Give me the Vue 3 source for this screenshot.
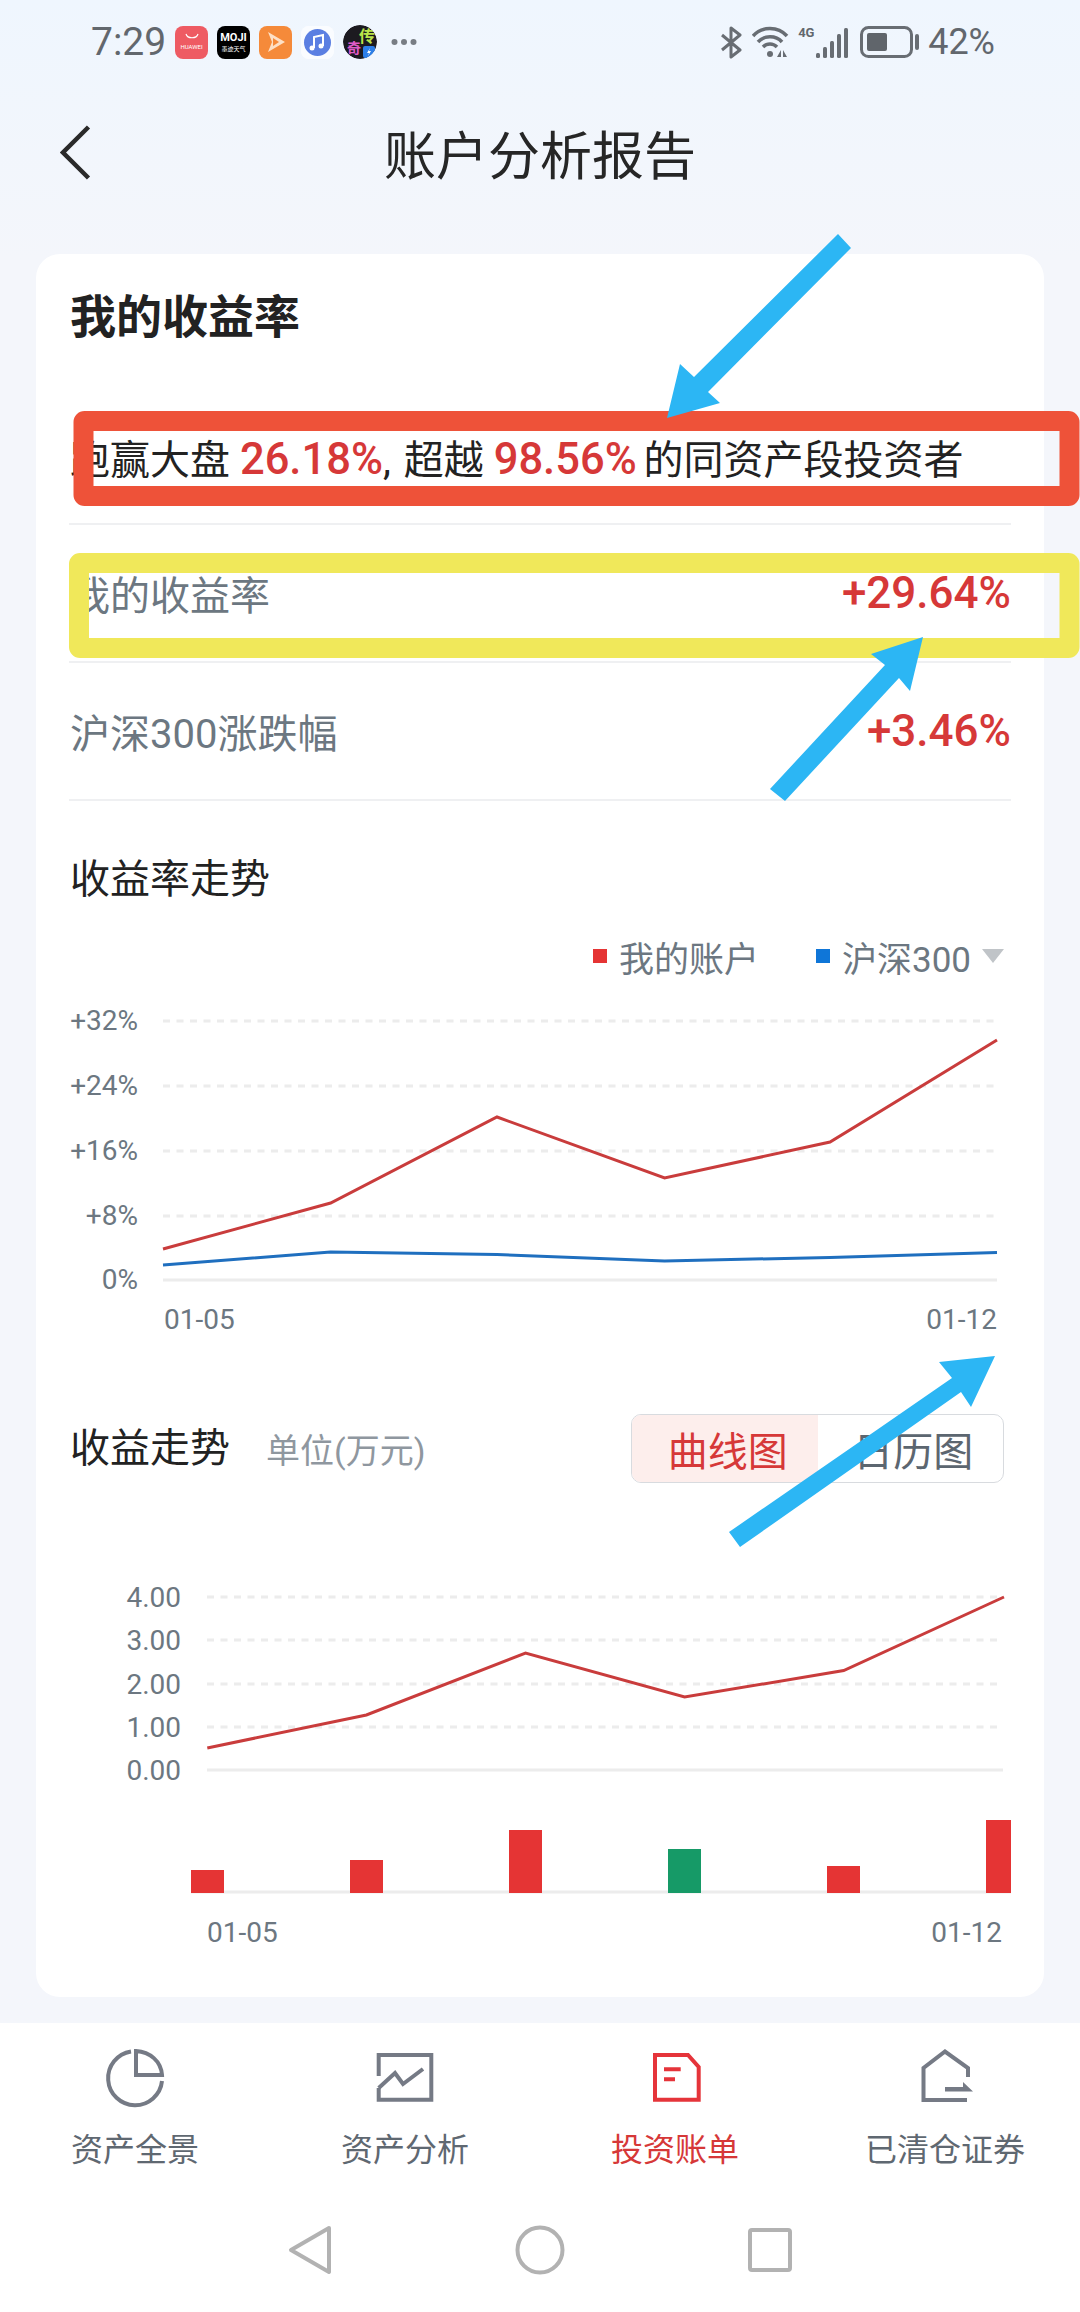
<script setup>
const pts = (xs, ys) => xs.map((x, i) => `${x},${ys[i]}`).join(' ')

const rows = [
  { label: '我的收益率', value: '+29.64%' },
  { label: '沪深300涨跌幅', value: '+3.46%' }
]

const rateTicks = [
  { y: 1020, label: '+32%' },
  { y: 1085, label: '+24%' },
  { y: 1150, label: '+16%' },
  { y: 1215, label: '+8%' }
]
const rateX = [163, 330.6, 497, 664.6, 830, 997]
const rateMine = pts(rateX, [1248, 1202, 1116, 1177, 1141, 1039])
const rateIndex = pts(rateX, [1264, 1251, 1253.6, 1260, 1256.4, 1251.4])

const incomeTicks = [
  { y: 1597, label: '4.00' },
  { y: 1640, label: '3.00' },
  { y: 1684, label: '2.00' },
  { y: 1727, label: '1.00' }
]
const incomeLine = pts(
  [207.3, 366.4, 525.5, 684.6, 843.7, 1004],
  [1748, 1715, 1653, 1697, 1670.6, 1597]
)
const bars = [
  { x: 191, w: 33, top: 1870, fill: '#e53434' },
  { x: 350, w: 33, top: 1860, fill: '#e53434' },
  { x: 509, w: 33, top: 1830, fill: '#e53434' },
  { x: 668, w: 33, top: 1849, fill: '#169a67' },
  { x: 827, w: 33, top: 1866, fill: '#e53434' },
  { x: 986, w: 25, top: 1820, fill: '#e53434' }
]
const signal = [
  { x: 0, h: 5 },
  { x: 7, h: 11 },
  { x: 14, h: 17 },
  { x: 21, h: 24 },
  { x: 28, h: 30 }
]
</script>

<template>
  <div class="page">
    <div class="status">
      <span class="time">7:29</span>
      <div class="apps">
        <div class="app huawei">
          <svg width="14" height="7" viewBox="0 0 14 7"><path d="M1 1c1.500 5 10.500 5 12 0" fill="none" stroke="#fff" stroke-width="1.200"/></svg>
          <span>HUAWEI</span>
        </div>
        <div class="app moji">
          <b>MOJI</b>
          <span>墨迹天气</span>
        </div>
        <div class="app play">
          <svg width="24" height="24" viewBox="0 0 24 24"><path d="M4 2 L21 12 L4 22 L8 12 Z" fill="#fde0c6"/><path d="M9 8 L15 12 L9 16 Z" fill="#f58a3a"/></svg>
        </div>
        <div class="app music">
          <svg width="33" height="33" viewBox="0 0 33 33">
            <rect width="33" height="33" rx="6" fill="#fafcff"/>
            <circle cx="16.500" cy="16.500" r="13.500" fill="#5b7fe2"/>
            <path d="M13 22V11l9-2v11" fill="none" stroke="#fff" stroke-width="2"/>
            <circle cx="11" cy="22" r="2.500" fill="#fff"/>
            <circle cx="20" cy="20" r="2.500" fill="#fff"/>
          </svg>
        </div>
        <div class="app game">
          <svg width="34" height="34" viewBox="0 0 34 34">
            <circle cx="17" cy="17" r="17" fill="#1c1a20"/>
            <text x="16" y="17" class="g1">传</text>
            <text x="4" y="28" class="g2">奇</text>
            <rect x="20" y="21" width="12" height="12" rx="2" fill="#2d7fe8"/>
            <path d="M27 23l-3 5h2l-1 3 3-5h-2z" fill="#fff"/>
          </svg>
        </div>
        <svg class="more" width="26" height="8" viewBox="0 0 26 8">
          <circle cx="3.500" cy="4" r="3" fill="#787d84"/>
          <circle cx="13" cy="4" r="3" fill="#787d84"/>
          <circle cx="22.500" cy="4" r="3" fill="#787d84"/>
        </svg>
      </div>
      <div class="sys">
        <svg class="bt" width="23" height="33" viewBox="0 0 23 33"><path d="M2 9 L20 24 L11 31 V2 L20 9 L2 24" fill="none" stroke="#686d73" stroke-width="3" stroke-linejoin="round"/></svg>
        <svg class="wifi" width="37" height="32" viewBox="0 0 37 32">
          <path d="M1 10C10 0 26 0 35 10" fill="none" stroke="#686d73" stroke-width="3.500"/>
          <path d="M6 16C12 9 24 9 30 16" fill="none" stroke="#686d73" stroke-width="3.500"/>
          <path d="M11 21C15 17 21 17 25 21" fill="none" stroke="#686d73" stroke-width="3.500"/>
          <circle cx="18" cy="28" r="3" fill="#686d73"/>
          <path d="M29 24v7h-4zM31 24v7h4z" fill="#686d73"/>
        </svg>
        <div class="cell">
          <span class="net">4G</span>
          <svg class="signal" width="32" height="30" viewBox="0 0 32 30">
            <rect v-for="b in signal" :key="b.x" :x="b.x" :y="30 - b.h" width="4" :height="b.h" rx="1.500" fill="#686d73"/>
          </svg>
        </div>
        <svg class="battery" width="60" height="32" viewBox="0 0 60 32">
          <rect x="1.500" y="1.500" width="50" height="29" rx="7" fill="none" stroke="#686d73" stroke-width="3"/>
          <rect x="7" y="7" width="20" height="18" rx="2" fill="#60656b"/>
          <rect x="55" y="8" width="4" height="16" rx="2" fill="#686d73"/>
        </svg>
        <span class="pct">42%</span>
      </div>
    </div>

    <header class="nav">
      <svg class="back" width="32" height="56" viewBox="0 0 32 56"><path d="M28.500 2 L3 27.500 L28.500 53" fill="none" stroke="#2a2a2a" stroke-width="4.500"/></svg>
      <h1>账户分析报告</h1>
    </header>

    <main class="card">
      <h2 class="card-title">我的收益率</h2>
      <div class="row summary">
        <span>跑赢大盘 <em>26.18%</em><span class="comma">,</span> 超越 <em class="tight">98.56%</em> 的同资产段投资者</span>
      </div>
      <div v-for="r in rows" :key="r.label" class="row">
        <span class="label">{{ r.label }}</span>
        <span class="value">{{ r.value }}</span>
      </div>

      <h3 class="sub first">收益率走势</h3>
      <div class="legend">
        <i class="dot red"></i><span>我的账户</span>
        <i class="dot blue"></i><span>沪深300</span>
        <i class="tri"></i>
      </div>
      <svg class="chart one" width="1008" height="355" viewBox="36 990 1008 355">
        <line v-for="t in rateTicks" :key="t.y" x1="163" x2="997" :y1="t.y" :y2="t.y" class="grid"/>
        <text v-for="t in rateTicks" :key="t.label" x="138" :y="t.y + 9" text-anchor="end" class="tick">{{ t.label }}</text>
        <line x1="163" x2="997" y1="1279" y2="1279" class="axis"/>
        <text x="138" y="1288" text-anchor="end" class="tick">0%</text>
        <polyline :points="rateMine" class="line mine"/>
        <polyline :points="rateIndex" class="line index"/>
        <text x="164" y="1328" class="tick">01-05</text>
        <text x="997" y="1328" text-anchor="end" class="tick">01-12</text>
      </svg>

      <div class="income-head">
        <h3 class="sub">收益走势</h3>
        <span class="unit">单位(万元)</span>
        <div class="seg">
          <span class="on">曲线图</span>
          <span>日历图</span>
        </div>
      </div>
      <svg class="chart two" width="1008" height="460" viewBox="36 1500 1008 460">
        <line v-for="t in incomeTicks" :key="t.y" x1="207" x2="999" :y1="t.y" :y2="t.y" class="grid"/>
        <text v-for="t in incomeTicks" :key="t.label" x="181" :y="t.y + 10" text-anchor="end" class="tick">{{ t.label }}</text>
        <line x1="207" x2="1003" y1="1770" y2="1770" class="axis"/>
        <text x="181" y="1780" text-anchor="end" class="tick">0.00</text>
        <polyline :points="incomeLine" class="line mine"/>
        <line x1="191" x2="1011" y1="1892" y2="1892" class="axis"/>
        <rect v-for="b in bars" :key="b.x" :x="b.x" :y="b.top" :width="b.w" :height="1893 - b.top" :fill="b.fill"/>
        <text x="207" y="1942" class="tick">01-05</text>
        <text x="1002" y="1942" text-anchor="end" class="tick">01-12</text>
      </svg>
    </main>

    <nav class="tabs">
      <div class="tab">
        <svg width="60" height="60" viewBox="0 0 60 60">
          <path d="M26 2.500A27 27 0 1 0 57 32" class="ti"/>
          <path d="M31 2V26H57C56 12 45 3 31 2Z" class="ti"/>
        </svg>
        <span>资产全景</span>
      </div>
      <div class="tab">
        <svg width="60" height="60" viewBox="0 0 60 60">
          <path d="M3.700 27V6H56.300V50.700H3.700V39" class="ti"/>
          <path d="M3.700 39L20 24L28 35L48 20" class="ti"/>
        </svg>
        <span>资产分析</span>
      </div>
      <div class="tab active">
        <svg width="60" height="60" viewBox="0 0 60 60">
          <path d="M10 6H43L53.700 18V50.700H10Z" class="ti"/>
          <path d="M19 20.300H35.700M19 30.300H30" class="ti"/>
        </svg>
        <span>投资账单</span>
      </div>
      <div class="tab">
        <svg width="60" height="60" viewBox="0 0 60 60">
          <path d="M52 51H8.500V19L30 2.500L53 19V28" class="ti"/>
          <path d="M30 38H48V33L58 42.500H30Z" fill="#757a85"/>
        </svg>
        <span>已清仓证券</span>
      </div>
    </nav>

    <div class="sysnav">
      <div class="key">
        <svg width="50" height="50" viewBox="0 0 50 50"><path d="M44 3L6 25L44 47Z" fill="none" stroke="#b2b2b2" stroke-width="4" stroke-linejoin="round"/></svg>
      </div>
      <div class="key">
        <svg width="50" height="50" viewBox="0 0 50 50"><circle cx="25" cy="25" r="22.500" fill="none" stroke="#b2b2b2" stroke-width="4"/></svg>
      </div>
      <div class="key">
        <svg width="50" height="50" viewBox="0 0 50 50"><rect x="5" y="5" width="40" height="40" rx="2" fill="none" stroke="#b2b2b2" stroke-width="4"/></svg>
      </div>
    </div>

    <svg class="marks" width="1080" height="2312" viewBox="0 0 1080 2312">
      <rect x="83.500" y="421" width="986" height="75" rx="1" fill="none" stroke="#ee5239" stroke-width="20" stroke-linejoin="round"/>
      <rect x="79" y="563" width="990.500" height="85" rx="1" fill="none" stroke="#f0e85a" stroke-width="20" stroke-linejoin="round"/>
      <polygon points="838,234 851,248 708,392 720,403 667,418 680,364 694,377" fill="#2cb6f4"/>
      <polygon points="923,637 871,654 885,665 770,789 785,801 899,678 910,691" fill="#2cb6f4"/>
      <polygon points="995,1356 939,1362 952,1378 729,1532 740,1547 961,1392 971,1407" fill="#2cb6f4"/>
    </svg>
  </div>
</template>

<style>
body {
  margin: 0;
}
</style>

<style scoped>
.page {
  position: relative;
  width: 1080px;
  height: 2312px;
  overflow: hidden;
  display: flex;
  flex-direction: column;
  background: linear-gradient(#eff6fe 0, #f4f6fb 260px);
  font-family: Roboto, "Noto Sans CJK SC", sans-serif;
  color: #222;
}
.status {
  height: 84px;
  box-sizing: border-box;
  padding: 0 85px 0 91px;
  display: flex;
  align-items: center;
  color: #62676d;
}
.time {
  font-size: 39px;
  width: 84px;
}
.pct {
  font-size: 36px;
  margin-left: 8px;
}
.apps {
  display: flex;
  align-items: center;
  gap: 9px;
}
.app {
  flex: none;
  width: 33px;
  height: 33px;
  border-radius: 8px;
  display: flex;
  flex-direction: column;
  align-items: center;
  justify-content: center;
  overflow: hidden;
}
.huawei {
  background: #ee5b63;
  color: #fff;
  font-size: 6px;
}
.huawei span {
  line-height: 9px;
  margin-top: 2px;
}
.moji {
  background: #000;
  color: #fff;
}
.moji b {
  font-size: 11px;
  line-height: 13px;
}
.moji span {
  font-size: 6px;
  line-height: 10px;
  white-space: nowrap;
}
.play {
  background: #f58a3a;
}
.music {
  background: #fafcff;
}
.game {
  width: 34px;
  height: 34px;
  border-radius: 50%;
}
.g1 {
  font-size: 16px;
  fill: #b9e34a;
  font-weight: 700;
}
.g2 {
  font-size: 14px;
  fill: #e05bc8;
  font-weight: 700;
}
.more {
  margin-left: 5px;
}
.sys {
  margin-left: auto;
  display: flex;
  align-items: center;
}
.wifi {
  margin-left: 9px;
}
.cell {
  display: flex;
  align-items: flex-end;
  height: 32px;
  margin-left: 9px;
}
.net {
  font-size: 13px;
  font-weight: 700;
  line-height: 14px;
  align-self: flex-start;
  width: 18px;
  white-space: nowrap;
}
.battery {
  margin-left: 12px;
}
.nav {
  position: relative;
  height: 136px;
  display: flex;
  align-items: center;
  justify-content: center;
}
.nav h1 {
  margin: 0;
  font-size: 52px;
  font-weight: 400;
  color: #262626;
}
.back {
  position: absolute;
  left: 60px;
  top: 41px;
}
.card {
  margin: 34px 36px 0;
  height: 1743px;
  box-sizing: border-box;
  padding: 33px 33px 0 33px;
  background: #fff;
  border-radius: 24px;
}
.card-title {
  margin: 0 0 40px 1px;
  font-size: 46px;
  line-height: 60px;
  font-weight: 700;
  color: #222;
}
.row {
  height: 138px;
  box-sizing: border-box;
  border-bottom: 2px solid #eff0f2;
  display: flex;
  align-items: center;
  justify-content: space-between;
  padding: 0 0 0 1px;
  font-size: 40px;
}
.summary {
  padding-top: 4px;
  color: #222;
  white-space: nowrap;
}
.comma {
  margin-right: 3px;
}
em {
  font-style: normal;
  font-weight: 500;
  font-size: 43.500px;
  color: #d63838;
}
.tight {
  margin-right: -3px;
}
.label {
  color: #6c7781;
}
.value {
  font-size: 44px;
  font-weight: 500;
  color: #d63838;
}
.sub {
  margin: 0;
  font-size: 40px;
  font-weight: 400;
  line-height: 60px;
  color: #222;
}
.first {
  margin: 49px 0 0 1px;
}
.legend {
  height: 58px;
  margin-top: 17px;
  display: flex;
  align-items: center;
  justify-content: flex-end;
  padding-right: 7px;
  font-size: 35px;
  color: #6c7781;
}
.dot {
  width: 14px;
  height: 14px;
  margin-right: 12px;
}
.red {
  background: #e53434;
}
.blue {
  background: #0f76d8;
  margin-left: 57px;
}
.tri {
  width: 0;
  height: 0;
  margin-left: 11px;
  border-left: 11px solid transparent;
  border-right: 11px solid transparent;
  border-top: 14px solid #c0c4c8;
}
.chart {
  display: block;
  margin-left: -33px;
  font-family: Roboto, sans-serif;
}
.one {
  margin-top: 6px;
}
.two {
  margin-top: 17px;
}
.tick {
  font-size: 28px;
  fill: #6c7781;
}
.grid {
  stroke: #ececec;
  stroke-width: 3;
  stroke-dasharray: 7 6.500;
}
.axis {
  stroke: #ececec;
  stroke-width: 3;
}
.line {
  fill: none;
  stroke-width: 3;
}
.mine {
  stroke: #c93c3c;
}
.index {
  stroke: #1f6fbf;
}
.income-head {
  margin-top: 68px;
  height: 69px;
  display: flex;
  align-items: center;
  padding-left: 1px;
}
.unit {
  margin-left: 36px;
  font-size: 34px;
  color: #8f979f;
}
.seg {
  margin-left: auto;
  margin-right: 7px;
  width: 373px;
  height: 69px;
  box-sizing: border-box;
  border: 1.500px solid #d8dbdf;
  border-radius: 10px;
  overflow: hidden;
  display: flex;
  font-size: 40px;
  color: #5c6670;
}
.seg span {
  flex: 1;
  box-sizing: border-box;
  padding-left: 6px;
  display: flex;
  align-items: center;
  justify-content: center;
}
.seg .on {
  background: #fdeeec;
  color: #d63838;
}
.tabs {
  margin-top: 26px;
  height: 177px;
  background: #fff;
  display: grid;
  grid-template-columns: repeat(4, 1fr);
}
.tab {
  padding-top: 26px;
  display: flex;
  flex-direction: column;
  align-items: center;
  gap: 19px;
  font-size: 32px;
  line-height: 44px;
  color: #5f6871;
}
.ti {
  fill: none;
  stroke: #757a85;
  stroke-width: 4;
}
.active {
  color: #d63838;
}
.active .ti {
  stroke: #e5343a;
}
.sysnav {
  height: 112px;
  box-sizing: border-box;
  padding-bottom: 12px;
  background: #fff;
  display: flex;
  align-items: center;
  justify-content: center;
}
.key {
  width: 230px;
  display: flex;
  justify-content: center;
}
.marks {
  position: absolute;
  left: 0;
  top: 0;
  pointer-events: none;
}
</style>
